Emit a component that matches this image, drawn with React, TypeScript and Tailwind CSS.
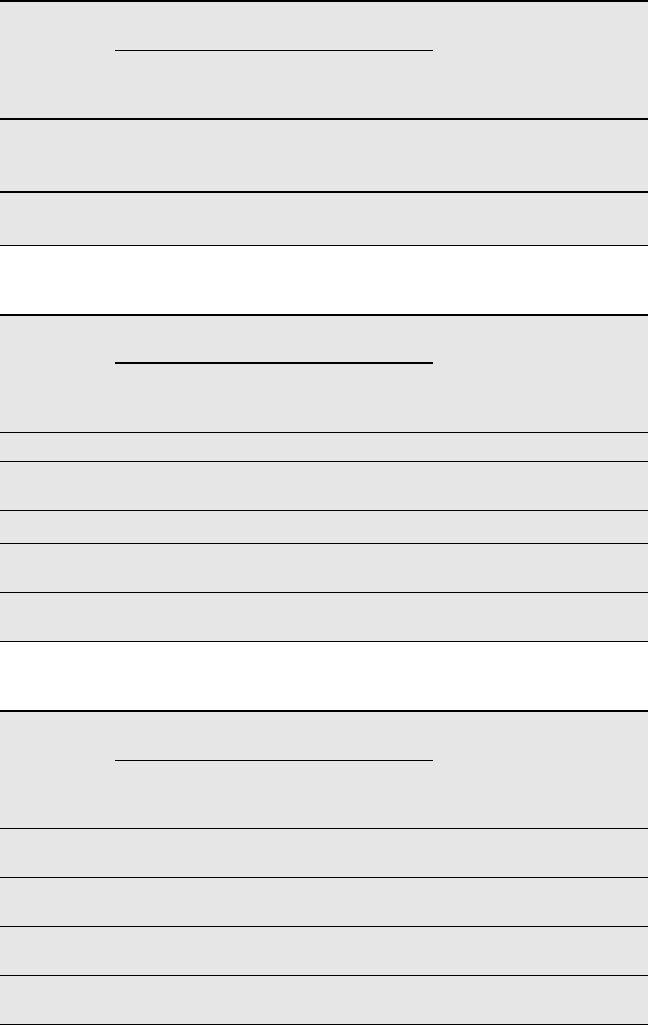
type Row = { h: string; b: string };

const rowsA: Row[] = [
  { h: "h-[73px]", b: "border-b-2" },
  { h: "h-[53px]", b: "border-b" },
];

const rowsB: Row[] = [
  { h: "h-[29px]", b: "border-b" },
  { h: "h-[49px]", b: "border-b" },
  { h: "h-[33px]", b: "border-b" },
  { h: "h-[49px]", b: "border-b" },
  { h: "h-[49px]", b: "border-b" },
];

const rowsC: Row[] = [
  { h: "h-[49px]", b: "border-b" },
  { h: "h-[49px]", b: "border-b" },
  { h: "h-[49px]", b: "border-b" },
  { h: "h-[49px]", b: "border-b" },
];

function Table({
  rows,
  headH,
  headBorder,
  lineTop,
  lineThick,
  col,
}: {
  rows: Row[];
  headH: string;
  headBorder: string;
  lineTop: string;
  lineThick: string;
  col: string;
}) {
  return (
    <div className="w-full bg-[#e6e6e6] border-t-2 border-black">
      {/* header row with the blank entry line */}
      <div className={`grid ${col} ${headH} ${headBorder} border-black`}>
        <div />
        <div className="col-span-1">
          <div className={`${lineTop} ml-[115px] w-[318px] ${lineThick} border-black`} />
        </div>
      </div>
      {rows.map((r, i) => (
        <div key={i} className={`grid ${col} ${r.h} ${r.b} border-black`}>
          <div />
          <div />
        </div>
      ))}
    </div>
  );
}

export default function App() {
  return (
    <div className="w-[648px] min-h-screen bg-white flex flex-col gap-[68px]">
      <Table
        rows={rowsA}
        headH="h-[118px]"
        headBorder="border-b-2"
        lineTop="mt-[48px]"
        lineThick="border-b"
        col="grid-cols-[0px_1fr]"
      />
      <Table
        rows={rowsB}
        headH="h-[117px]"
        headBorder="border-b"
        lineTop="mt-[46px]"
        lineThick="border-b-2"
        col="grid-cols-[0px_1fr]"
      />
      <Table
        rows={rowsC}
        headH="h-[117px]"
        headBorder="border-b"
        lineTop="mt-[48px]"
        lineThick="border-b"
        col="grid-cols-[0px_1fr]"
      />
    </div>
  );
}
